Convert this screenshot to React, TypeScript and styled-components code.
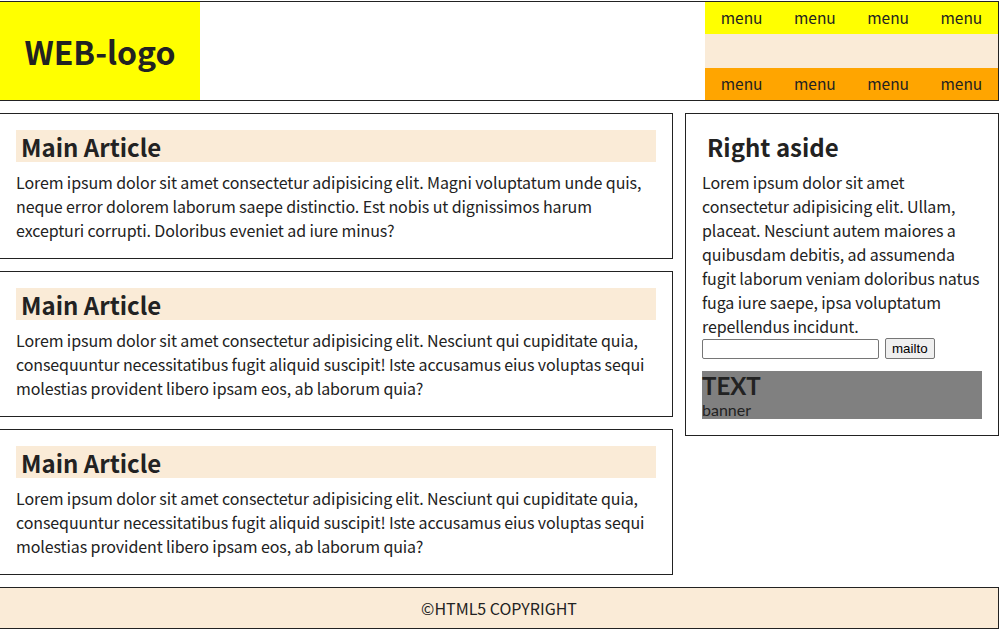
import React from "react";
import styled, { createGlobalStyle } from "styled-components";

const Global = createGlobalStyle`
  html, body { margin: 0; padding: 0; background: #fff; }
  body {
    font-family: "Noto Sans CJK KR", "Noto Sans", sans-serif;
    font-size: 16px;
    color: #222;
  }
  * { box-sizing: border-box; }
`;

const Page = styled.div`
  width: 1000px;
  margin: 1px 0 0 -1px;
  display: flex;
  flex-direction: column;
  gap: 12px;
`;

const Header = styled.header`
  height: 100px;
  border: 1px solid #222;
  display: flex;
`;

const Logo = styled.div`
  width: 200px;
  background: #ff0;
  display: flex;
  align-items: center;
  justify-content: center;
  font-size: 32px;
  font-weight: 700;
`;

const Spacer = styled.div`
  flex: 1;
`;

const Nav = styled.nav`
  width: 293px;
  display: grid;
  grid-template-rows: 32px 1fr 32px;
  background: #faebd7;
`;

const MenuRow = styled.ul<{ $bg: string }>`
  margin: 0;
  padding: 0;
  list-style: none;
  display: grid;
  grid-template-columns: repeat(4, 1fr);
  background: ${(p) => p.$bg};
`;

const MenuItem = styled.li`
  display: flex;
  align-items: center;
  justify-content: center;
  padding-bottom: 2px;
  font-size: 15.5px;
`;

const Content = styled.div`
  display: grid;
  grid-template-columns: 674px 314px;
  gap: 12px;
  align-items: start;
`;

const MainCol = styled.main`
  display: flex;
  flex-direction: column;
  gap: 12px;
`;

const Box = styled.section`
  border: 1px solid #222;
  padding: 16px;
`;

const Title = styled.h2<{ $bg?: string }>`
  margin: 0 0 8px;
  padding-left: 5px;
  height: 32px;
  line-height: 33px;
  font-size: 24px;
  font-weight: 700;
  background: ${(p) => p.$bg || "transparent"};
`;

const Text = styled.p`
  margin: 0;
  line-height: 24px;
  letter-spacing: -0.1px;
`;

const Form = styled.form`
  display: flex;
  align-items: center;
  gap: 6px;
  margin: 0;
`;

const Input = styled.input`
  width: 177px;
  height: 20px;
  border: 1px solid #767676;
  border-radius: 2px;
  padding: 1px 2px;
`;

const Button = styled.button`
  height: 21px;
  padding: 1px 6px;
  font-family: "Liberation Sans", Arial, sans-serif;
  font-size: 13.33px;
  color: #000;
  background: #efefef;
  border: 1px solid #767676;
  border-radius: 2px;
`;

const Banner = styled.div`
  margin-top: 12px;
  height: 48px;
  background: #808080;
  display: flex;
  flex-direction: column;
  font-family: Lato, "Noto Sans CJK KR", sans-serif;
`;

const BannerTitle = styled.strong`
  font-size: 24px;
  line-height: 29px;
  font-weight: 700;
`;

const BannerSub = styled.span`
  font-size: 16px;
  line-height: 19px;
`;

const Footer = styled.footer`
  height: 42px;
  border: 1px solid #222;
  background: #faebd7;
  display: flex;
  align-items: center;
  justify-content: center;
`;

const articles = [
  "Lorem ipsum dolor sit amet consectetur adipisicing elit. Magni voluptatum unde quis, neque error dolorem laborum saepe distinctio. Est nobis ut dignissimos harum excepturi corrupti. Doloribus eveniet ad iure minus?",
  "Lorem ipsum dolor sit amet consectetur adipisicing elit. Nesciunt qui cupiditate quia, consequuntur necessitatibus fugit aliquid suscipit! Iste accusamus eius voluptas sequi molestias provident libero ipsam eos, ab laborum quia?",
  "Lorem ipsum dolor sit amet consectetur adipisicing elit. Nesciunt qui cupiditate quia, consequuntur necessitatibus fugit aliquid suscipit! Iste accusamus eius voluptas sequi molestias provident libero ipsam eos, ab laborum quia?",
];

export default function App() {
  const menus = ["menu", "menu", "menu", "menu"];
  return (
    <>
      <Global />
      <Page>
        <Header>
          <Logo>WEB-logo</Logo>
          <Spacer />
          <Nav>
            <MenuRow $bg="#ff0">
              {menus.map((m, i) => (
                <MenuItem key={i}>{m}</MenuItem>
              ))}
            </MenuRow>
            <div />
            <MenuRow $bg="#ffa500">
              {menus.map((m, i) => (
                <MenuItem key={i}>{m}</MenuItem>
              ))}
            </MenuRow>
          </Nav>
        </Header>
        <Content>
          <MainCol>
            {articles.map((t, i) => (
              <Box as="article" key={i}>
                <Title $bg="#faebd7">Main Article</Title>
                <Text>{t}</Text>
              </Box>
            ))}
          </MainCol>
          <Box as="aside">
            <Title>Right aside</Title>
            <Text>
              Lorem ipsum dolor sit amet consectetur adipisicing elit. Ullam,
              placeat. Nesciunt autem maiores a quibusdam debitis, ad assumenda
              fugit laborum veniam doloribus natus fuga iure saepe, ipsa
              voluptatum repellendus incidunt.
            </Text>
            <Form onSubmit={(e) => e.preventDefault()}>
              <Input type="text" />
              <Button type="submit">mailto</Button>
            </Form>
            <Banner>
              <BannerTitle>TEXT</BannerTitle>
              <BannerSub>banner</BannerSub>
            </Banner>
          </Box>
        </Content>
        <Footer>©HTML5 COPYRIGHT</Footer>
      </Page>
    </>
  );
}
